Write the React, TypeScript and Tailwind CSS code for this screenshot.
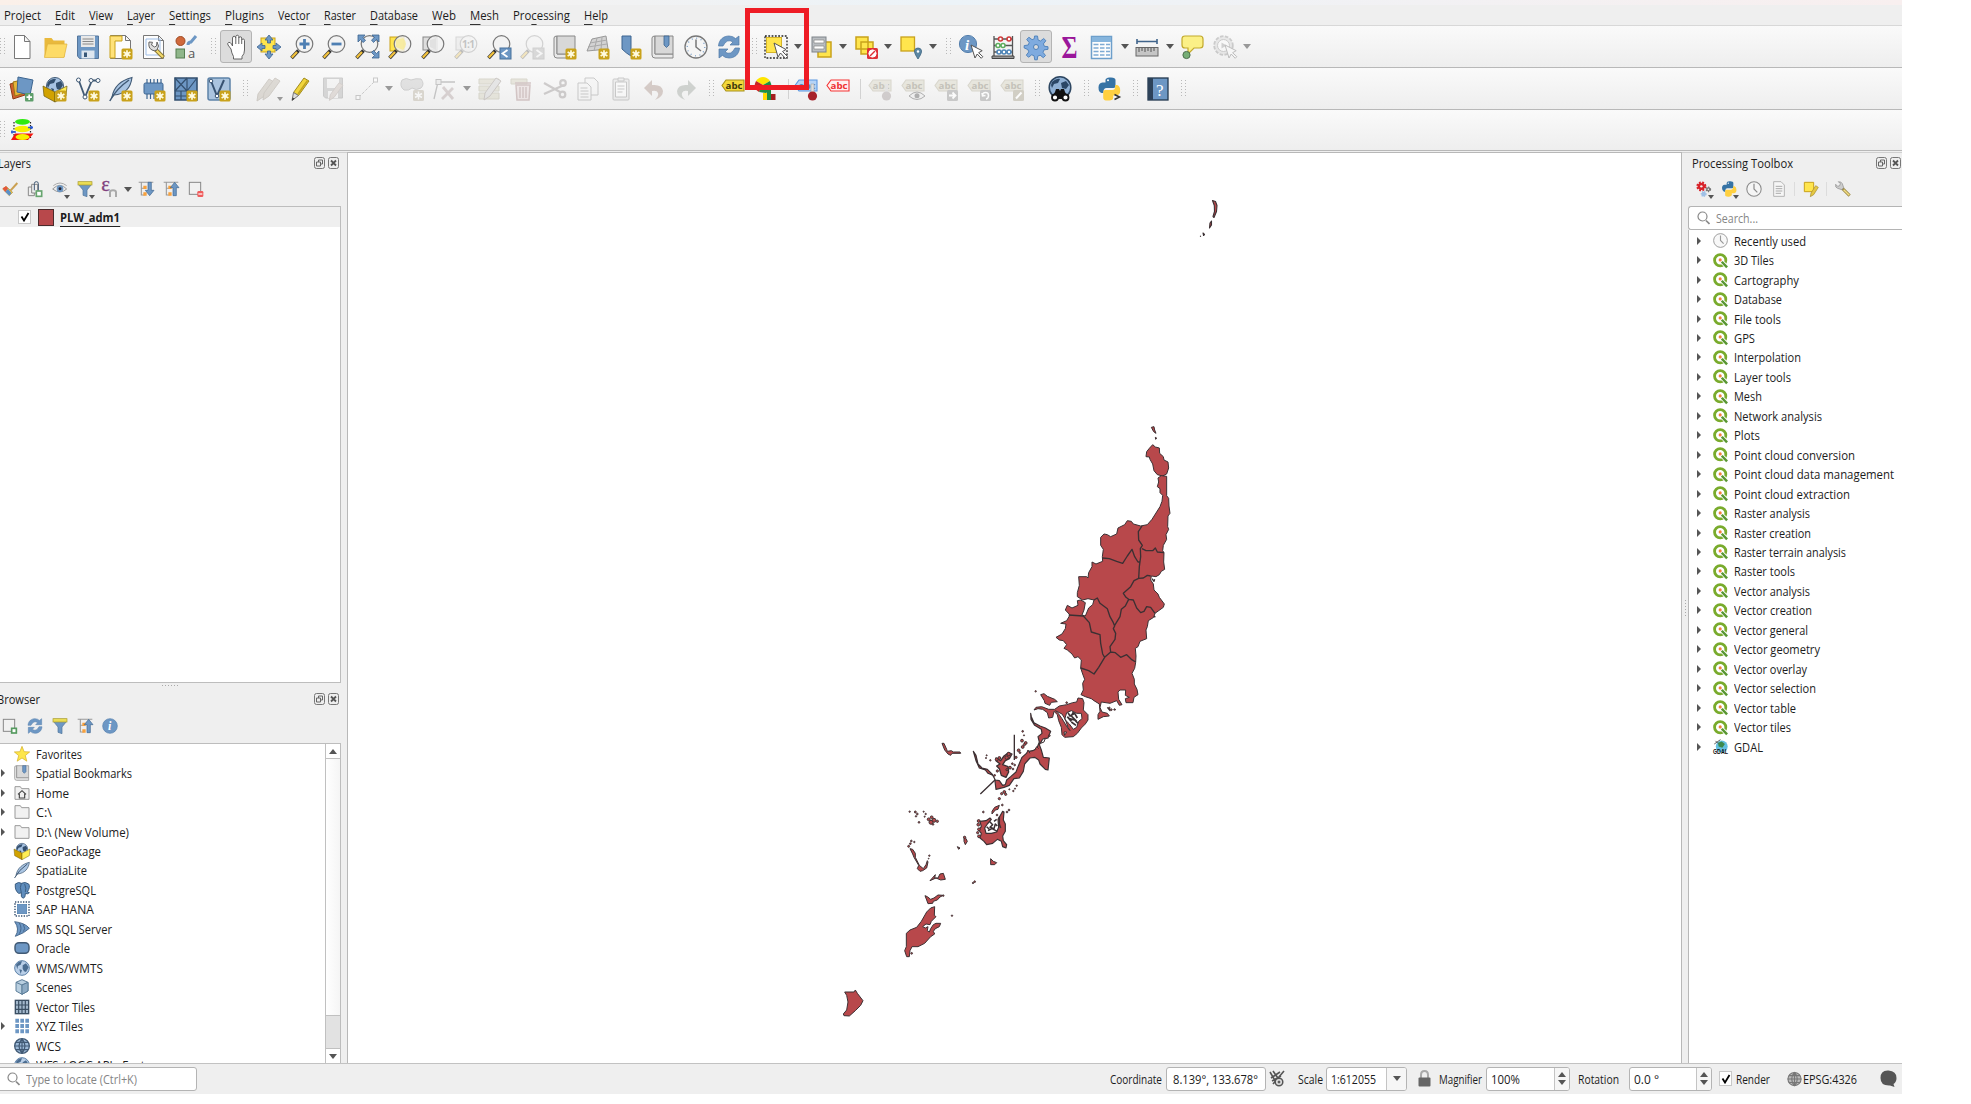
import React, { useLayoutEffect, useRef, useState } from "react";

/* Text squeezed horizontally to the given width. */
function T({ w, children, className = "" }: { w: number; children: React.ReactNode; className?: string }) {
  const ref = useRef<HTMLSpanElement>(null);
  const [s, setS] = useState(1);
  useLayoutEffect(() => {
    if (ref.current && ref.current.offsetWidth) setS(w / ref.current.getBoundingClientRect().width);
  }, []);
  return (
    <span className={"inline-block shrink-0 " + className} style={{ width: w }}>
      <span ref={ref} className="inline-block origin-left whitespace-pre" style={{ transform: `scaleX(${s})` }}>
        {children}
      </span>
    </span>
  );
}

const B = "#6d97c4";
const D = "#415a75";

const star = (
  <g>
    <rect x="12.5" y="13.5" width="11" height="11" rx="1.5" fill="#c9a21b" />
    <path d="M18 15.2v7.6M14.6 17l6.8 4M14.6 21l6.8-4" stroke="#fffbe0" strokeWidth="1.7" />
  </g>
);
const cursor = <path d="M12 10l4 13 2.2-4 4 4.3 1.6-1.6-4.2-4 3.6-2z" fill="#fff" stroke="#555" strokeWidth="1" />;
const mag = (
  <g>
    <path d="M8.5 15.5L1.5 23" stroke="#333" strokeWidth="3.6" />
    <path d="M7 17L1.8 22.6" stroke="#f3c33c" strokeWidth="2.2" />
    <circle cx="14.5" cy="9" r="8.3" fill="#f2f2f2" fillOpacity=".85" stroke="#777" strokeWidth="1.2" />
  </g>
);
const page = (
  <path d="M1.5.5h15l5 5v18h-20z M16.5.5v5h5" fill="#fdfdfd" stroke="#777" />
);
const globe = (
  <g>
    <circle cx="12" cy="9" r="8.5" fill="#a7c3e3" stroke={D} />
    <path d="M5 5q5-4 8-3l-2 4-4 1-2 4-1-3zM13 6l5-2 2 4-3 5-3-1-1-3zM8 11l3 1-1 4z" fill="#34506f" />
  </g>
);
const box = (
  <g>
    {globe}
    <path d="M0 9l12 6v10L1 19z" fill="#d1a200" stroke="#6b5a10" strokeWidth=".7" />
    <path d="M24 9l-12 6v10l11-6z" fill="#ffee55" stroke="#6b5a10" strokeWidth=".7" />
  </g>
);
const feather = (
  <g>
    <path d="M3 20C5 9 13 3 23 .5 22 9 17 17 5 18z" fill="#a9c4e2" stroke={D} strokeWidth="1.1" />
    <path d="M.8 24Q7 12 20 3" fill="none" stroke={D} strokeWidth="1.5" />
  </g>
);
const tag = (fill: string, line: string, ink: string) => (
  <g>
    <path d="M5 3h18v11H5L1 8.5z" fill={fill} stroke={line} strokeWidth="1.1" />
    <text x="4.6" y="12" fontSize="9" fontWeight="700" fill={ink} className="font-['Open_Sans',sans-serif]" textLength="17" lengthAdjust="spacingAndGlyphs">
      abc
    </text>
  </g>
);
const greyTag = tag("#e3e1d6", "#cfccbf", "#b4b1a6");
const refresh = (
  <g fill={B} stroke="#4d79a8" strokeWidth=".7">
    <path d="M1.5 11C2 4 7 1 12 1q4 0 6.600 2.600L22 1v9h-9l3-3q-6-4-10 4z" />
    <path d="M22.500 13c-.5 7-5.500 10-10.500 10q-4 0-6.600-2.600L2 23v-9h9l-3 3q6 4 10-4z" />
  </g>
);
const clock = (
  <g fill="none">
    <circle cx="12" cy="12" r="11" fill="#f5f5f5" stroke="#777" strokeWidth="1.3" />
    <circle cx="12" cy="12" r="8.800" stroke="#6d97c4" strokeWidth="1.200" strokeDasharray="1 3.600" />
    <path d="M12 4.500V12l5 4" stroke="#777" strokeWidth="1.500" />
  </g>
);
const python = (
  <g>
    <path d="M7 9V3q0-2 4-2.500 6-.5 6 2.500v6q0 2-2 2H8q-3 0-3 3.500v1.500H3q-3-1-3-5.500t4-5h7V7z" fill="#3673a5" transform="translate(1.500 0)" />
    <path d="M17 15v6q0 2-4 2.500-6 .5-6-2.500v-6q0-2 2-2h7q3 0 3-3.500V8h2q3 1 3 5.500t-4 5h-7V18z" fill="#ffd040" transform="translate(-.8 0)" />
    <circle cx="11" cy="3.300" r="1" fill="#fff" />
  </g>
);
const filter = (
  <g>
    <path d="M2 5h20l-7 8.500v10l-6-2v-8z" fill={B} stroke="#4d7299" />
    <rect x="1.500" y="1" width="21" height="5" fill="#e9dc55" stroke="#a79a2a" />
  </g>
);
const info = (
  <g>
    <circle cx="12" cy="12" r="11" fill={B} stroke="#5580ad" />
    <text x="9" y="18.500" fontSize="18" fontStyle="italic" fontWeight="700" fill="#fff" className="font-['Liberation_Serif',serif]">i</text>
  </g>
);
const tree = (
  <g fill="none">
    <path d="M1 2h22M5 2v19h5M5 11h5" stroke="#999" strokeWidth="1.600" />
    <path d="M8 7h5v5H8zM8 17h5v5H8z" fill="#f8a13c" />
  </g>
);
const folder = <path d="M1.500 2.500h8l2 3h11v16h-21z" fill="#f1f1f1" stroke="#999" strokeWidth="1.500" />;
const book = (
  <g>
    <path d="M1 3q0-2 3-2v18h18v4H4q-3 0-3-3z" fill="#e8e8e8" stroke="#888" />
    <path d="M4 1h18v18H4z" fill="#d8d8d8" stroke="#888" />
  </g>
);
const pencil = (a: string, b: string) => (
  <path d="M4 16L15 1l5 3L9 19l-6 4z" fill={a} stroke={b} />
);
const globeGrid = (
  <g fill="none">
    <circle cx="12" cy="12" r="11" fill="#9cb9d8" stroke={D} strokeWidth="2" />
    <path d="M1 12h22M12 1v22M3 6.500h18M3 17.500h18M12 1q-9 11 0 22M12 1q9 11 0 22" stroke={D} strokeWidth="1.800" />
  </g>
);
const gearPath = "M10.500 1h3l.6 4 2.400 1 3.200-2.500 2.200 2.200-2.500 3.200 1 2.400 3.600.4v2.600l-4 .6-1 2.400 2.500 3.200-2.200 2.200-3.200-2.500-2.400 1-.4 3.600h-2.600l-.6-4-2.400-1-3.200 2.500-2.200-2.200 2.500-3.200-1-2.400L.200 13v-2.400l4-.6 1-2.400L2.700 4.400l2.200-2.200 3.200 2.500 2.200-1z";

const icons: Record<string, React.ReactNode> = {
  new: <path d="M4.500.500h10l5.500 6V23.500H4.500z M14.500.500v6h5.500" fill="#fff" stroke="#777" />,
  open: <g><path d="M1.500 3h7l2 2.500h11V22h-20z" fill="#e9b93c" /><path d="M4.500 9H24l-3 13.500H1.500z" fill="#fddb67" stroke="#e0b23a" strokeWidth=".7" /></g>,
  save: <g><path d="M1.500 1h21v22.500H3.500L1.500 21z" fill={B} stroke="#54769c" /><rect x="5" y="1" width="14" height="11" fill="#e9e9e9" /><path d="M6.500 4h11M6.500 6.500h11M6.500 9h11" stroke="#888" /><path d="M5.500 15.500h13v8h-13z" fill="#dde6ef" /><path d="M8 17.500h3v4.500H8z" fill="#385878" /></g>,
  layoutNew: <g>{page}<path d="M1 1h12v5H6v17H1z" fill="#ffe27a" stroke="#c9a21b" />{star}</g>,
  layoutMgr: <g>{page}<path d="M4 4h14v16H4z" fill="none" stroke="#9dbde6" /><path d="M13 14l8.500 8.500" stroke="#8d7a35" strokeWidth="4" /><path d="M14.500 15.500l6.500 6.500" stroke="#f5dc6c" strokeWidth="2" /><path d="M7 7l3.500.3L9.500 10l3 2 2-1 .5-4q3 4 0 8-3 1.500-5 0-4-2-3-8z" fill="#ddd" stroke="#666" /></g>,
  styles: <g><circle cx="6.500" cy="6" r="4.500" fill="#d0693c" stroke="#a04a22" /><path d="M14 10q0-3 3-3l5-6" stroke={B} strokeWidth="3" fill="none" /><rect x="2" y="14" width="8.500" height="9" fill="#8fb68a" stroke="#557d50" /><text x="14" y="23" fontSize="13" fill="#555" className="font-['Open_Sans',sans-serif]">a</text></g>,
  hand: <path d="M7 14L4 10q-1-2 .8-2.600 1.500-.4 2.700 1.600l1 2V3q.2-1.800 1.600-1.800T11.800 3V1.600Q12 .2 13.300.2t1.500 1.400V3q.2-1.200 1.500-1.200T17.700 3v2q.3-1 1.500-1t1.300 1.500V15q0 4-2.500 6.500V24H9.500v-2.500Q7.500 18 7 14zM11.800 3v6M14.800 3v6M17.700 5v4" fill="#fff" stroke="#555" strokeWidth=".9" />,
  panSel: <g><rect x="4" y="3" width="14" height="14" fill="#ffe54d" stroke="#c9a21b" /><path d="M12 0l4 5h-2.500v3h-3V5H8zM12 24l4-5h-2.500v-3h-3v3H8zM0 12l5-4v2.500h3v3H5V16zM24 12l-5-4v2.500h-3v3h3V16z" fill={B} stroke="#3d6590" strokeWidth=".8" /></g>,
  zoomIn: <g>{mag}<path d="M14.500 4v10M9.500 9h10" stroke="#4e7fb3" strokeWidth="2.800" /></g>,
  zoomOut: <g>{mag}<path d="M9.500 9h10" stroke="#4e7fb3" strokeWidth="2.800" /></g>,
  zoomFull: <g>{mag}<path d="M3 0h7L8 2.500l2.500 3-2.500 2-2.500-3L3 7zM24 0v7l-2.500-2.500-3 3-2-2.500 3-2.500L17 0zM24 23h-7l2.500-2.500-3-3 2-2 3 3L24 16z" fill={B} stroke="#3d6590" strokeWidth=".8" /></g>,
  zoomSel: <g><rect x="2" y="2" width="14" height="14" fill="#ffe54d" stroke="#c9a21b" />{mag}<path d="M15 3q6 6 0 12l-7-3V5z" fill="#f8e98a" opacity=".7" /></g>,
  zoomLayer: <g><rect x="2" y="2" width="14" height="13" fill="#ddd" stroke="#888" />{mag}<path d="M15 3v12l-6-3V5z" fill="#ddd" opacity=".8" /></g>,
  zoomNative: <g opacity=".28"><rect x="2" y="2" width="14" height="13" fill="#ddd" stroke="#888" />{mag}<text x="8" y="13" fontSize="10" fontWeight="700" fill="#444" textLength="13" className="font-['Open_Sans',sans-serif]">1:1</text></g>,
  zoomLast: <g>{mag}<rect x="13" y="13" width="11" height="11" fill={B} stroke="#47709b" /><path d="M20.500 15l-5 3.500 5 3.500" fill="none" stroke="#fff" strokeWidth="1.800" /></g>,
  zoomNext: <g opacity=".28">{mag}<rect x="13" y="13" width="11" height="11" fill="#999" stroke="#777" /><path d="M16.500 15l5 3.500-5 3.500" fill="none" stroke="#fff" strokeWidth="1.800" /></g>,
  mapView: <g>{book}{star}</g>,
  map3d: <g><path d="M6 4l14-3 2 13-21 2z" fill="#d3d3d3" stroke="#999" /><path d="M4 8l17-3M2 12l19-3M11 3l-3 13M16 2l-1 13" stroke="#aaa" fill="none" />{star}</g>,
  bookmarkNew: <g><path d="M4 1h9v20l-4.500-3L4 14z" fill={B} stroke="#3d6590" />{star}</g>,
  bookmarks: <g>{book}<path d="M13 1h5v9l-2.500 2.500L13 10z" fill={B} stroke="#3d6590" strokeWidth=".8" /></g>,
  clock,
  refresh,
  select: <g><rect x="2.500" y="2.500" width="15" height="15" fill="#ffe54d" stroke="#d6b529" /><rect x="1" y="1" width="22" height="22" fill="none" stroke="#222" strokeWidth="1.300" strokeDasharray="1.800 1.500" /><path d="M10 8l4 14 2.500-4 5 5.500 2-2-5-5 3.500-2z" fill="#fff" stroke="#555" strokeWidth="1" /></g>,
  selValue: <g><rect x="9" y="7" width="13" height="15" fill="#ffe54d" stroke="#c9a21b" strokeWidth="1.500" /><rect x="3" y="2" width="14" height="15" fill="#b9bdc1" stroke="#7e8489" /><path d="M5 5h10v3H5zM5 11h10v3H5z" fill="#fff" stroke="#888" strokeWidth=".7" /></g>,
  deselect: <g><path d="M2 2h12v12H2zM7 7h12v12H7z" fill="#ffe54d" stroke="#c9a21b" strokeWidth="1.500" /><rect x="13" y="13" width="11" height="11" rx="1.500" fill="#df3038" /><circle cx="18.500" cy="18.500" r="3.600" fill="#fff" stroke="#fff" /><path d="M16 21l5-5" stroke="#df3038" strokeWidth="1.500" /></g>,
  selLoc: <g><rect x="2" y="2" width="13.500" height="14" fill="#ffe54d" stroke="#c9a21b" strokeWidth="1.300" /><path d="M19 24q-4-6-3.500-8.500t3.500-2.500 3.500 2.500T19 24z" fill="#5c87a3" stroke="#3d6580" strokeWidth=".8" /><circle cx="19" cy="16.500" r="1.200" fill="#fff" /></g>,
  identify: <g><circle cx="9" cy="9" r="8.600" fill={B} stroke="#5580ad" /><text x="6" y="14.500" fontSize="15" fontStyle="italic" fontWeight="700" fill="#fff" className="font-['Liberation_Serif',serif]">i</text>{cursor}</g>,
  abacus: <g fill="none"><path d="M3 1v21M21.500 1v21M3 4h18M3 10.500h18M3 17h18" stroke="#555" strokeWidth="1.300" /><path d="M1 21h22v2.500H1z" fill="#999" stroke="#444" /><g fill="#fff" strokeWidth="1.600"><g stroke="#d03a3a"><circle cx="9.500" cy="4" r="2" /><circle cx="18" cy="4" r="2" /></g><g stroke="#5fae5f"><circle cx="7" cy="10.500" r="2" /><circle cx="12" cy="10.500" r="2" /></g><g stroke="#4f86b8"><circle cx="8" cy="17" r="2" /><circle cx="13" cy="17" r="2" /><circle cx="18" cy="17" r="2" /></g></g></g>,
  gear: <g><path d={gearPath} fill="#7fabdf" stroke="#4b7fb9" strokeWidth=".9" /><circle cx="12" cy="12" r="2.500" fill="#dcdcdc" stroke="#4b7fb9" /></g>,
  sigma: <text x="4.500" y="22.500" fontSize="31" fontWeight="700" fill="#9a169a" textLength="16" lengthAdjust="spacingAndGlyphs" className="font-['Liberation_Serif',serif]">Σ</text>,
  table: <g><rect x="1.500" y="1.500" width="20" height="22" fill="#fdfdfd" stroke="#6d9fcb" strokeWidth="1.500" /><rect x="2" y="2" width="19" height="5" fill="#86b5dd" /><path d="M3.500 9.500h5M10 9.500h4.500M16 9.500h4M3.500 13h5M10 13h4.500M16 13h4M3.500 16.500h5M10 16.500h4.500M16 16.500h4M3.500 20h5M10 20h4.500M16 20h4" stroke="#7eaad3" strokeWidth="1.400" /></g>,
  ruler: <g fill="none"><path d="M2 6.500h20M2 4v5M22 4v5" stroke="#40648b" strokeWidth="1.600" /><rect x="1" y="12.500" width="22" height="8.500" fill="#c5c5c5" stroke="#666" /><path d="M4 13v4M7 13v3M10 13v4M13 13v3M16 13v4M19 13v3" stroke="#555" /></g>,
  tip: <g><path d="M5 1h15q3 0 3 3v6q0 3-3 3h-6l-6 6V13H5q-3 0-3-3V4q0-3 3-3z" fill="#fbf087" stroke="#c2a92c" strokeWidth="1.200" /><circle cx="6.500" cy="20" r="3.600" fill="#76ae76" stroke="#4c6f4c" /></g>,
  action: <g opacity=".33"><circle cx="10.500" cy="10.500" r="9.300" fill="#ccc" stroke="#777" strokeWidth="1.800" strokeDasharray="3.500 1.500" /><circle cx="10.500" cy="10.500" r="6" fill="#fff" stroke="#777" /><path d="M8.500 7.500l5 3-5 3z" fill="#888" />{cursor}</g>,
  dsm: <g><path d="M0 7l12-3 3 14-12 4z" fill="#d0602f" stroke="#8d3c16" /><path d="M3 5l13-3 2 13-13 4z" fill="#e5b53a" stroke="#9a7517" /><path d="M8 0l15 3-3 15-13-3z" fill={B} stroke="#3d6590" /><rect x="15" y="16" width="8.500" height="8.500" rx="1" fill="#5d9e6a" /><path d="M19.200 17.500v5.500M16.500 20.200h5.500" stroke="#fff" strokeWidth="1.700" /></g>,
  gpkg: <g>{box}{star}</g>,
  shp: <g fill="#fff" stroke={D}><path d="M3 4L9 20 16 3.500h6" fill="none" strokeWidth="1.800" /><circle cx="2.500" cy="3" r="2" /><circle cx="9" cy="20" r="2" /><circle cx="15" cy="3.500" r="2" /><circle cx="22" cy="3.500" r="2" /><g stroke="none">{star}</g></g>,
  spatialite: <g>{feather}{star}</g>,
  memory: <g><path d="M5 2v20M8.500 2v20M12 2v20M15.500 2v20M19 2v20" stroke="#3d6590" strokeWidth="1.200" /><rect x="2" y="6" width="19" height="11" rx="1.500" fill={B} stroke="#3d6590" />{star}</g>,
  mesh: <g><path d="M1 1h22v22H1z" fill={B} stroke="#34506f" strokeWidth="1.600" /><path d="M13 1v22M1 14h22M1 1l12 13M13 1L1 14M23 1L13 14M7 14v9M1 19h12" stroke="#34506f" strokeWidth="1.200" />{star}</g>,
  gpx: <g><rect x="1" y="1" width="22" height="22" rx="2" fill="#aac4df" stroke="#5d82a8" strokeWidth="1.500" /><path d="M4 4l6 15 7-16" fill="none" stroke="#385372" strokeWidth="2" /><circle cx="4" cy="4" r="1.800" fill="#fff" stroke="#385372" /><circle cx="10" cy="19" r="1.800" fill="#fff" stroke="#385372" />{star}</g>,
  editsOff: <g opacity=".4"><g transform="translate(-2 1)">{pencil("#b9b1a4", "#9a9184")}</g><g transform="translate(4 0)">{pencil("#b9b1a4", "#9a9184")}</g></g>,
  pencil: <g><path d="M4.500 15.500L15 1l5 3L9.500 18.500z" fill="#f1d53c" stroke="#a18b1c" /><path d="M9 17L18.500 3.500" stroke="#c2a420" strokeWidth="1.500" /><path d="M4.500 15.500l-1.500 8 6.500-5z" fill="#ddd" stroke="#777" /><path d="M3 23.500l.6-3 2 1.300z" fill="#333" /></g>,
  saveOff: <g opacity=".32"><path d="M1.500 1h19v20h-17l-2-2z" fill="#999" stroke="#777" /><path d="M5 2h12v9H5zM6 14h10v7H6z" fill="#eee" /><g transform="translate(5 5) scale(.8)">{pencil("#b9a9a0", "#86766f")}</g></g>,
  lineOff: <g opacity=".4" fill="#fff" stroke="#888"><path d="M4 20L20 4" strokeDasharray="3 1.500" /><rect x="1" y="18.500" width="4" height="4" /><rect x="18.500" y="1" width="4" height="4" /></g>,
  polyOff: <g opacity=".35"><path d="M2 3q4-3 9 0 5-2 10-1 4 5 0 9-5 3-9 0-3 3-8 2-5-4-2-10z" fill="#bbb" stroke="#888" /><rect x="13" y="13" width="11" height="11" rx="1.500" fill="#aaa08a" /><path d="M18.500 14.500v8M15 16.500l7 4M15 20.500l7-4" stroke="#fff" strokeWidth="1.500" /></g>,
  vertexOff: <g opacity=".38" fill="none" stroke="#777"><path d="M5 5h17M5 5L1 22" strokeWidth="1.300" /><rect x="3" y="2.500" width="5" height="5" fill="#ddd" /><path d="M9 22L20 11M10 10l10 12" strokeWidth="2.800" stroke="#a99" /></g>,
  attrOff: <g opacity=".38"><path d="M1 2h20v5H1zM1 9h20v5H1zM1 16h20v6H1z" fill="#cfcbb4" stroke="#a9a58c" /><g transform="translate(3 0)">{pencil("#ccc", "#8a8079")}</g></g>,
  trashOff: <g opacity=".38"><path d="M1 2h16v5H1z" fill="#cfcbb4" stroke="#a9a58c" /><path d="M5 6h16M6 8h14l-1 15H7z M10 10v11M13 10v11M16 10v11" fill="#e3d0d0" stroke="#a07c7c" strokeWidth="1.500" /></g>,
  cutOff: <g opacity=".36" fill="none" stroke="#8a8484" strokeWidth="2.200"><path d="M1 6l16 9M1 17l20-9" /><circle cx="19.500" cy="17.500" r="2.800" /><circle cx="20" cy="6" r="2.800" /></g>,
  copyOff: <g opacity=".34" fill="#f4f4f4" stroke="#777"><path d="M9 1h9l4 4v13H9z" /><path d="M2 6h9l4 4v13H2z" /><path d="M4.500 11h7M4.500 14h8M4.500 17h8M4.500 20h8" /></g>,
  pasteOff: <g opacity=".34" fill="#ddd" stroke="#777"><rect x="4" y="2" width="16" height="21" rx="1" /><path d="M6.500 5h11v15h-11z" fill="#fff" /><path d="M8.500 9h7M8.500 12h7M8.500 15h5" /><path d="M9 1h6v3H9z" /></g>,
  undoOff: <path d="M10 3v5q10-1 11 6 0 6-8 9 4-4 3-7-1-3-6-2v5l-8-8z" fill="#c9bcb7" opacity=".75" />,
  redoOff: <path d="M13 3v5Q3 7 2 14q0 6 8 9-4-4-3-7 1-3 6-2v5l8-8z" fill="#c2c6c2" opacity=".75" />,
  abcYellow: tag("#f4d93b", "#a8921c", "#41390d"),
  pie: <g><path d="M9 8L2 4Q5 0 9 0t7 4z" fill="#ffe500" /><path d="M9 8L2 4q-4 7 3 11z" fill="#c62626" /><path d="M9 8l7-4q4 8-4 12l-7-1z" fill="#1c9045" /><path d="M9 16h4v7H9z" fill="#ffd900" /><path d="M13 12h4v11h-4z" fill="#1c9045" /><path d="M17 17h4.500v6H17z" fill="#a51f1f" /></g>,
  abcBlue: <g>{tag("#b5d3f6", "#5b97e2", "#5b87bb")}<path d="M17 7h3v9h-3z" fill="#ddd" stroke="#999" strokeWidth=".5" /><circle cx="18.500" cy="19" r="4.600" fill="#a7222b" /></g>,
  abcRed: tag("#fff1f1", "#f53434", "#e33"),
  abcPin: <g opacity=".7">{greyTag}<path d="M17 7h3v9h-3z" fill="#ddd" /><circle cx="18.500" cy="19" r="4.600" fill="#c2bcbc" /></g>,
  abcEye: <g opacity=".75">{greyTag}<path d="M8 19q8-8 16 0-8 7-16 0z" fill="#eee" stroke="#999" /><circle cx="16" cy="18.700" r="2.500" fill="#999" /></g>,
  abcMove: <g opacity=".75">{greyTag}<rect x="13" y="13" width="11" height="11" rx="1.500" fill="#bbb" /><path d="M15 18.500h6M18.500 15.500l3 3-3 3" fill="none" stroke="#fff" strokeWidth="1.800" /></g>,
  abcRot: <g opacity=".75">{greyTag}<rect x="13" y="13" width="11" height="11" rx="1.500" fill="#bbb" /><path d="M15.500 18.500q0-3 3-3t3 3-2.500 3.500M15 16l.5 3 3-.5" fill="none" stroke="#fff" strokeWidth="1.500" /></g>,
  abcEdit: <g opacity=".75">{greyTag}<rect x="13" y="13" width="11" height="11" rx="1.500" fill="#c6c2b5" /><path d="M16 21.500l5.500-6" stroke="#fff" strokeWidth="2" /></g>,
  search: <g><circle cx="12" cy="10.500" r="10.800" fill="#8fb0d4" stroke="#2d4661" strokeWidth="1.500" /><path d="M4 5q5-4 8-3l-2 4-4 1-2 4-1-3zM13 6l5-2 3 4-3 4-4-1z" fill="#2b4766" /><path d="M8 12h3l1 2 1-2h3l1 3 3 5-5 2h-6l-5-2 3-5z" fill="#111" /><circle cx="7" cy="20.500" r="3" fill="#fff" stroke="#111" strokeWidth="1.800" /><circle cx="17.500" cy="20.500" r="3" fill="#fff" stroke="#111" strokeWidth="1.800" /></g>,
  pyConsole: <g>{python}<path d="M17.500 17.500l5 2.500-5 2.500" fill="none" stroke="#333" strokeWidth="1.500" /></g>,
  help: <g><rect x="2" y="1" width="20" height="22" fill={B} stroke="#23384f" strokeWidth="1.300" /><path d="M2 1h5v22H2z" fill="#2d4259" /><text x="10" y="18.500" fontSize="17" fill="#fff" className="font-['Liberation_Serif',serif]">?</text></g>,
  stack: <g><path d="M4 4v16M20.500 4v16" stroke="#222" strokeWidth="1.200" strokeDasharray="1.500 1.500" /><ellipse cx="12.500" cy="3.800" rx="7.500" ry="2.900" fill="#2eea12" /><ellipse cx="12.500" cy="11" rx="8" ry="3.200" fill="#f7f000" /><path d="M1 14h5M18 9.500h5M2 12.500v3M21.500 8v3" stroke="#2b5bd7" strokeWidth="1.600" /><path d="M1 22l4-6.500h18.500L18 22z" fill="#f3150e" /><ellipse cx="12.500" cy="19" rx="7" ry="2.900" fill="#f7f000" /></g>,
  brush: <g><path d="M13 14L23 3" stroke="#caa052" strokeWidth="3" /><path d="M6 8l10 9-5 5L1 12z" fill="#e7c24b" stroke="#b4903a" /><path d="M1 11l5-3 3 3-4 6z" fill="#e4573d" /><path d="M5 16l4-4 5 6-3 4z" fill="#5a8fc9" /></g>,
  addGroup: <g fill="#eee" stroke="#888" strokeWidth="1.500"><path d="M2 9h9v13H2z" /><path d="M7 5h9v13H7z" /><path d="M11 14V4q0-3 3-3t3 3v12" fill="none" stroke={D} /><rect x="14" y="15" width="8" height="8" fill="#fff" stroke="#67a56f" strokeWidth="2.500" /></g>,
  eye: <g><path d="M1 12Q12 1 22 12 12 21 1 12z" fill="#eee" stroke="#999" strokeWidth="1.500" /><circle cx="12" cy="11.500" r="5" fill="#6d97c4" /><circle cx="12" cy="11.500" r="2.200" fill="#223" /><path d="M2 7Q12-1 22 7" fill="none" stroke="#aaa" strokeWidth="1.500" /></g>,
  filter,
  epsilon: <g><text x="-1" y="15" fontSize="31" fill="#80407e" stroke="#80407e" strokeWidth=".5" className="font-['Liberation_Serif',serif]">ε</text><path d="M12 24v-7q0-3 4.500-3t4.500 3v7" fill="none" stroke="#aaa" strokeWidth="3" /></g>,
  expand: <g>{tree}<path d="M15 2h5v12h4l-6.500 8-6.500-8h4z" fill={B} stroke="#3d6590" /></g>,
  collapse: <g>{tree}<path d="M15 22h5V10h4l-6.500-8L11 10h4z" fill={B} stroke="#3d6590" /></g>,
  removeLayer: <g><rect x="2" y="2" width="17" height="18" fill="#f1f1f1" stroke="#888" strokeWidth="1.500" /><rect x="14" y="15" width="9" height="9" rx="2" fill="#ef5b5b" /><path d="M15.500 19.500h6" stroke="#fff" strokeWidth="1.800" /></g>,
  addLayer: <g><rect x="2" y="2" width="17" height="18" fill="#f1f1f1" stroke="#888" strokeWidth="1.500" /><rect x="14.500" y="15.500" width="7" height="7" fill="#fff" stroke="#559a5f" strokeWidth="2.500" /></g>,
  info,
  fav: <path d="M12 .500l3.200 8 8.300.4-6.500 5.400 2.200 8.500L12 18l-7.200 4.800L7 14.300.500 8.900l8.300-.4z" fill="#fde64b" stroke="#d1aa20" />,
  home: <g>{folder}<path d="M6 14l6-5.500 6 5.500M8 13v6.500h8V13" fill="none" stroke="#444" strokeWidth="1.700" /></g>,
  folder,
  gpkgPlain: box,
  feather,
  pg: <g><path d="M2 3q5-4 9-1 6-3 11 1 3 4-2 12l3 1q-3 3-6 1 0 8-4 7-3-1-2-8-2 1-4 1Q1 13 2 3z" fill="#5f8dbd" stroke="#3a5c80" strokeWidth="1.500" /><path d="M11 2q-3 6 0 14M16 3q3 7 1 12" fill="none" stroke="#3a5c80" strokeWidth="1.400" /></g>,
  hana: <g><rect x="5" y="5" width="14" height="14" fill={B} stroke="#4c7dae" /><rect x="1.500" y="1.500" width="21" height="21" fill="none" stroke="#385372" strokeWidth="2.200" strokeDasharray="2 2" /></g>,
  mssql: <path d="M1 1q16 2 22 10-7 7-21 12Q9 12 1 1zM8 3q5 8 0 16M14 5q4 7 0 11" fill={B} stroke="#3d5f84" strokeWidth="1.300" />,
  oracle: <rect x="1.500" y="4" width="21" height="16" rx="6" fill={B} stroke={D} strokeWidth="2.200" />,
  wms: <g><circle cx="12" cy="12" r="11" fill="#b9cfe8" stroke="#5d82a8" strokeWidth="1.500" /><path d="M3 7q5-6 9-5l-2 5-4 2-1 5zM13 8l5-3 4 6-4 7-3-1-2-4zM8 14l4 1-2 6z" fill="#4a6c90" /></g>,
  scenes: <g fill="#b9cfe0" stroke="#5d7e99" strokeWidth="1.500"><path d="M12 1l9 4v13l-9 5-9-5V5z" /><path d="M3 5l9 4 9-4M12 9v14" fill="none" /><path d="M12 9l9-4v13l-9 5z" fill="#8eabc4" /></g>,
  vtiles: <g><rect x="2" y="2" width="20" height="20" fill="#a3b8cc" stroke="#3b4f63" strokeWidth="2" /><path d="M7 2v20M12 2v20M17 2v20M2 9h20M2 15.500h20" stroke="#3b4f63" strokeWidth="1.800" /></g>,
  xyz: <path d="M2 1h5.500v6H2zM9.500 1H15v6H9.500zM17 1h5.500v6H17zM2 9h5.500v6H2zM9.500 9H15v6H9.500zM17 9h5.500v6H17zM2 17h5.500v6H2zM9.500 17H15v6H9.500zM17 17h5.500v6H17z" fill={B} />,
  wcs: globeGrid,
  q: <g><circle cx="11.500" cy="11.500" r="9" fill="#fff" stroke="#79ab2c" strokeWidth="4.500" /><path d="M14 14l9 9" stroke="#fff" strokeWidth="6.500" /><path d="M14 14l8.500 9" stroke="#589632" strokeWidth="4" /><circle cx="11.500" cy="11" r="2.500" fill="#f0813a" /></g>,
  recent: <g fill="none" stroke="#999"><circle cx="12" cy="12" r="11" fill="#f8f8f8" strokeWidth="1.500" /><path d="M12 4v8l5 5" strokeWidth="1.800" /></g>,
  gdal: <g><circle cx="14" cy="12" r="9.500" fill="#62bfe0" /><path d="M8 6l6-2 5 4-4 6-6-2z" fill="#3c8a4c" /><path d="M2 8L12 1M4 3l4 4" stroke="#555" strokeWidth="1.500" /><text x="0" y="24" fontSize="11" fontWeight="700" fill="#111" textLength="24" lengthAdjust="spacingAndGlyphs" className="font-['Liberation_Sans',sans-serif]">GDAL</text></g>,
  gears: <g><circle cx="8" cy="8" r="5.500" fill="#d8232a" stroke="#d8232a" strokeWidth="4" strokeDasharray="2.500 1.900" /><circle cx="8" cy="8" r="1.800" fill="#efefef" /><circle cx="18.500" cy="12.500" r="3" fill="#777" stroke="#777" strokeWidth="2.500" strokeDasharray="1.800 1.300" /><circle cx="18.500" cy="12.500" r="1.200" fill="#efefef" /><circle cx="11.500" cy="19.500" r="3.500" fill="#9fc0e6" stroke="#9fc0e6" strokeWidth="2" strokeDasharray="1.800 1.300" /></g>,
  python,
  history: <g fill="none" stroke="#8c8c8c"><circle cx="12" cy="12" r="10.800" strokeWidth="1.600" fill="#f5f5f5" /><path d="M12 4v8l5 5" strokeWidth="1.800" /></g>,
  results: <g fill="#f6f6f6" stroke="#aaa"><path d="M4 1h11l5 5v17H4z" strokeWidth="1.300" /><path d="M7 8h10M7 11.500h10M7 15h10M7 18.500h8" strokeWidth="1.500" /></g>,
  editInPlace: <g><path d="M2 2h14v14H2z" fill="#ffe54d" stroke="#c9a21b" strokeWidth="1.500" /><path d="M12 18l7-11 4 2.500-7 11-5 3z" fill="#e5c742" stroke="#a58b30" /></g>,
  wrench: <g><path d="M11 11l11 11" stroke="#9c8a45" strokeWidth="4.500" /><path d="M13 13l8.500 8.500" stroke="#f3dd83" strokeWidth="2.200" /><path d="M5 1l3 3-1 3-3 1-3-3q-1 5 3 6 3 1 6 2l3-3q-1-3-2-6-1-3-6-3z" fill="#ccc" stroke="#888" /></g>,
};

function Ic({ n, s = "size-6", className = "" }: { n: string; s?: string; className?: string }) {
  return (
    <svg viewBox="0 0 24 24" className={"shrink-0 overflow-visible " + s + " " + className}>
      {icons[n]}
    </svg>
  );
}

function Btn({ n, on }: { n: string; on?: boolean }) {
  return (
    <div className="flex w-[32.9px] shrink-0 justify-center">
      <div className={"flex h-[33px] w-8 items-center justify-center rounded-[3px] border " + (on ? "border-[#b4b4b4] bg-[#dcdcdc]" : "border-transparent")}>
        <Ic n={n} />
      </div>
    </div>
  );
}

const Arrow = ({ off }: { off?: boolean }) => (
  <div className="flex w-3 shrink-0 justify-center">
    <svg viewBox="0 0 8 5" className="h-[5px] w-2"><path d="M0 0h8L4 5z" fill={off ? "#999" : "#555"} /></svg>
  </div>
);

const dotsPath = (rows: number) => Array.from({ length: rows }, (_, i) => `M0 ${i * 3}h1v1h-1zM4 ${i * 3}h1v1h-1z`).join("");
const Handle = ({ className }: { className: string }) => (
  <div className={"flex shrink-0 justify-center " + className}>
    <svg viewBox="0 0 5 18" className="h-[18px] w-[5px]"><path d={dotsPath(6)} fill="#b9b9b9" /></svg>
  </div>
);
const Sep = ({ className }: { className: string }) => (
  <div className={"flex shrink-0 justify-end " + className}><div className="h-5 w-px bg-[#d2d2d2]" /></div>
);
const Bar = ({ children, className = "" }: { children: React.ReactNode; className?: string }) => (
  <div className={"flex h-[42px] shrink-0 items-center border-b border-[#b8b8b8] bg-linear-to-b from-[#fafafa] to-[#eeeeee] " + className}>{children}</div>
);

const menu: [string, string, string, number][] = [
  ["Project", "", "", 37], ["", "E", "dit", 20], ["", "V", "iew", 24], ["", "L", "ayer", 28], ["", "S", "ettings", 42], ["", "P", "lugins", 39],
  ["Vect", "o", "r", 32], ["", "R", "aster", 32], ["", "D", "atabase", 48], ["", "W", "eb", 24], ["", "M", "esh", 29], ["Pro", "c", "essing", 57], ["", "H", "elp", 24],
];

const browser: [string, string, number, boolean?][] = [
  ["fav", "Favorites", 46], ["bookmarks", "Spatial Bookmarks", 96, true], ["home", "Home", 33, true], ["folder", "C:\\", 16, true],
  ["folder", "D:\\ (New Volume)", 93, true], ["gpkgPlain", "GeoPackage", 65], ["feather", "SpatiaLite", 51], ["pg", "PostgreSQL", 60],
  ["hana", "SAP HANA", 58], ["mssql", "MS SQL Server", 76], ["oracle", "Oracle", 34], ["wms", "WMS/WMTS", 67], ["scenes", "Scenes", 36],
  ["vtiles", "Vector Tiles", 59], ["xyz", "XYZ Tiles", 47, true], ["wcs", "WCS", 25], ["wms", "WFS / OGC API - Features", 132],
];

const toolbox: [string, string, number][] = [
  ["recent", "Recently used", 72], ["q", "3D Tiles", 40], ["q", "Cartography", 65], ["q", "Database", 48], ["q", "File tools", 47], ["q", "GPS", 21],
  ["q", "Interpolation", 67], ["q", "Layer tools", 57], ["q", "Mesh", 28], ["q", "Network analysis", 88], ["q", "Plots", 26],
  ["q", "Point cloud conversion", 121], ["q", "Point cloud data management", 160], ["q", "Point cloud extraction", 116], ["q", "Raster analysis", 76],
  ["q", "Raster creation", 77], ["q", "Raster terrain analysis", 112], ["q", "Raster tools", 61], ["q", "Vector analysis", 76], ["q", "Vector creation", 78],
  ["q", "Vector general", 74], ["q", "Vector geometry", 86], ["q", "Vector overlay", 73], ["q", "Vector selection", 82], ["q", "Vector table", 62],
  ["q", "Vector tiles", 57], ["gdal", "GDAL", 29],
];

const DockButtons = () => (
  <div className="flex gap-[3px]">
    <svg viewBox="0 0 11 12" className="h-3 w-[11px]"><rect x=".5" y=".5" width="10" height="11" rx="2" fill="#eee" stroke="#777" /><path d="M2.500 5h4v4h-4zM4.500 5V3h4v4h-2" fill="none" stroke="#666" /></svg>
    <svg viewBox="0 0 11 12" className="h-3 w-[11px]"><rect x=".5" y=".5" width="10" height="11" rx="2" fill="#eee" stroke="#777" /><path d="M3 3.500l5 5M8 3.500l-5 5" stroke="#555" strokeWidth="1.800" /></svg>
  </div>
);

const Tri = () => <svg viewBox="0 0 4 8" className="h-2 w-1 shrink-0"><path d="M0 0l4 4-4 4z" fill="#555" /></svg>;
const Lens = () => (
  <svg viewBox="0 0 13 14" className="h-[14px] w-[13px] shrink-0" fill="none" stroke="#888"><circle cx="5.500" cy="5.500" r="4.500" strokeWidth="1.200" /><path d="M9 9.500l3.500 3.500" strokeWidth="1.700" /></svg>
);
const Small = ({ n, drop }: { n: string; drop?: boolean }) => (
  <div className="relative flex w-[25px] shrink-0 items-center justify-center">
    <Ic n={n} s="size-4" />
    {drop && <svg viewBox="0 0 6 4" className="absolute right-0.5 -bottom-0.5 h-1 w-1.5"><path d="M0 0h6L3 4z" fill="#555" /></svg>}
  </div>
);

/* Scattered islets: x, y and radius in the units of their group. */
const isletsA = [[488, 184, 3], [492, 196, 2], [486, 212, 5], [497, 219, 5], [488, 231, 5], [493, 224, 4], [476, 241, 5], [480, 248, 3], [380, 256, 2], [378, 264, 2], [391, 271, 2.500], [457, 281, 3], [464, 285, 3], [450, 293, 5], [441, 299, 4], [459, 297, 3], [470, 347, 2.500], [465, 356, 2], [460, 363, 2.500], [448, 358, 2], [418, 386, 4], [427, 405, 3], [370, 426, 3], [447, 420, 3], [441, 426, 3], [433, 366, 5], [425, 371, 4], [437, 373, 4], [411, 435, 3], [410, 268, 5], [418, 264, 5], [446, 252, 6], [440, 263, 6], [412, 303, 4], [404, 316, 3], [468, 262, 4], [527, 64, 2.500], [356, 453, 5], [355, 464, 5], [357, 478, 5], [353, 488, 4], [357, 499, 5], [620, 98, 3], [568, 197, 3], [748, 114, 3], [754, 119, 3], [763, 119, 2]];
const isletsB = [[239, 65, 2.500], [256, 66, 3.500], [262, 72, 3], [258, 79, 2.500], [281, 65, 2], [287, 72, 2.500], [284, 80, 2], [267, 97, 3], [296, 88, 5], [305, 82, 5], [312, 91, 7], [303, 97, 7], [322, 94, 4], [309, 103, 3], [244, 153, 3], [253, 156, 2.500], [241, 161, 3], [236, 169, 3.500], [298, 197, 2.500], [296, 206, 1.500], [366, 377, 2.500], [404, 142, 4], [429, 279, 2.500], [434, 275, 3], [245, 490, 3], [340, 317, 2.500]];

function MapCanvas() {
  return (
    <svg viewBox="348 153 1334 910" className="h-[910px] w-[1334px]" fill="#b8484b" stroke="#3b3033" strokeLinejoin="round">
      <path d="M1212.500 200.500l3 1 1.500 4-.5 6-2.500 6-1-1 1.500-5-.2-6zM1210 223l1.500-2v4l-2 3zM1203 233l1.500 1.500-1 1zM1200 236.500l1-.5" strokeWidth="1.100" />
      <g transform="translate(1020 400) scale(.33333)" strokeWidth="3">
        <path d="M394 82L402 80 404 90 408 100 401 95zM406 112L410 114 407 118z" />
        <path d="M398 134L406 141 418 144 419 160 430 170 432 180 444 186 446 204 440 222 428 228 412 224 402 212 398 192 390 178 388 171 378 170 380 155 388 145z" />
        <path d="M424 227L440 229 440 287 446 295 447 318 450 340 444 348 443 380 446 388 438 404 440 418 430 436 428 452 432 458 431 486 434 508 424 514 418 524 408 530 394 528 392 540 400 552 402 570 414 582 418 592 433 612 430 622 405 640 401 652 385 662 382 680 378 690 380 716 360 724 354 740 346 745 348 768 347 787 344 805 336 820 343 838 343 852 351 868 354 884 342 892 339 908 318 908 316 896 328 892 316 886 317 870 300 870 294 876 296 898 306 914 298 916 290 902 270 910 244 906 240 922 246 936 262 940 268 948 250 950 234 958 234 944 240 934 238 912 222 902 214 896 196 890 183 884 190 870 188 850 194 838 188 822 182 804 184 780 174 770 164 774 156 762 142 750 132 745 140 734 130 722 118 720 108 712 126 702 136 686 138 672 122 670 140 662 150 645 136 630 142 616 156 624 174 616 172 602 182 600 196 608 192 630 186 645 196 648 206 624 218 614 222 600 204 596 188 600 172 590 172 578 178 556 176 530 200 530 204 534 206 518 216 500 216 486 228 492 248 484 247 470 250 448 242 436 242 412 252 402 262 404 272 410 290 402 294 384 314 374 322 362 334 364 340 372 362 378 382 374 396 358 420 320 426 304 428 286 420 278 420 266 412 260 416 246 414 234z" />
        <path d="M366 378L355 395 356 420 367 436 361 446 362 470 358 500 356 535M366 446L378 452 398 452 406 444 412 456 432 458M248 474L268 476 290 484 308 490 322 468 336 448 344 470 354 486 360 486M392 528L382 526 370 534 356 535 342 542 332 560 310 580 318 592 326 598 316 618 304 628 300 650 284 676M326 598L340 600 350 624 362 638 372 634 380 620 392 622 405 640M222 600L232 594 240 610 262 626 270 650 280 668 284 678 280 686 287 700 285 718 270 740 272 756 286 758 302 772 320 764 334 778 347 786M146 645L190 648 208 668 214 696 240 704 242 730 248 762 254 772 272 756M254 772L236 802 222 822 206 812 182 804" fill="none" strokeWidth="4" />
        <path d="M396 536L402 544 404 538M262 922L270 932 266 924M282 926L287 930M402 648L406 652" fill="none" strokeWidth="4" />
      </g>
      <g transform="translate(860 670) scale(.33333)" strokeWidth="3">
        <path d="M542 74L552 71 562 79 584 88 592 95 574 97 569 106 555 100 553 92z" />
        <path fillRule="evenodd" d="M522 120L528 112 545 110 566 118 584 118 598 108 620 104 638 98 650 96 654 84 668 86 672 98 670 120 684 134 684 150 676 162 664 174 652 190 640 200 614 202 606 194 604 172 596 152 592 134 582 124 578 142 566 144 562 128 548 118 534 116zM620 128L634 122 650 130 664 130 666 146 656 154 650 172 640 178 628 162 614 148zM586 122L606 132 616 148 624 172 630 182 622 172 606 146 596 132zM612 186L620 186 614 196z" />
        <path d="M624 128L630 138 644 130 652 144M628 146L644 150 654 160M634 156L648 166M640 126L634 138 650 154M622 140L634 154" fill="none" strokeWidth="5" />
        <path d="M512 130L513 148 524 166 544 178 546 190 534 200 538 216 530 236 518 242 506 244 486 262 474 290 468 306 452 320 440 330 436 344 428 346 418 332 406 330 398 316 384 310 376 300 358 294 348 272 340 244 348 256 354 282 366 294 382 298 398 314 404 326 408 358 432 352 448 346 462 326 478 324 490 304 494 282 510 264 524 262 536 270 540 282 556 298 564 300 568 264 550 262 544 240 538 224 548 208 564 204 572 184 556 174 540 168 522 158 514 140z" strokeWidth="3.500" />
        <path d="M408 264L422 272 432 258 446 248 456 252 448 266 436 272 428 284 444 290 446 306 438 322 424 316 418 296 410 288 420 282 408 272z" strokeWidth="4" />
        <path d="M548 208L556 204 552 216 542 220z" fill="#fff" />
        <path d="M500 250L504 240 510 250M524 240L530 230 536 236" />
        <path d="M463 194v76M361 372l44-42" fill="none" strokeWidth="4" />
        <path d="M246 220L252 220 260 238 262 244 274 242 280 246 300 246 302 250 276 250 272 256 264 252 254 240z" />
        <path d="M396 424L404 412 418 406 414 418 406 420 396 432z" />
        <path d="M360 454L378 452 390 444 394 448 382 462 374 474 378 490 394 490 410 486 416 472 414 448 420 438 428 424 432 426 430 450 436 462 436 484 428 498 430 512 440 524 438 534 428 530 424 514 412 508 398 520 380 524 372 514 360 504 364 490 356 480 364 470z" strokeWidth="3.500" />
        <path d="M388 454L398 464 390 472 402 476 406 462 412 468M384 482L396 476 412 484M402 454L410 448M418 440L418 462 422 474M380 470L388 478" fill="none" strokeWidth="4.500" />
        <path d="M312 500L318 506 322 514 316 524 312 514zM292 530L300 534 296 538zM392 566L400 574 410 578 404 584 392 584z" />
        {isletsA.map(([x, y, r], i) => <circle key={i} cx={x} cy={y} r={r * 0.85} strokeWidth="2.800" />)}
      </g>
      <g transform="translate(830 790) scale(.33333)" strokeWidth="3">
        <path d="M240 176L248 178 256 190 256 202 268 226 280 236 288 224 292 212 294 216 290 234 278 242 270 244 262 236 266 226 252 202 248 192z" />
        <path d="M300 272L316 254 314 264 324 264 330 252 340 250 346 268 332 270 318 264z" />
        <path d="M285 317L292 320 302 328 312 324 324 315 340 316 330 321 322 330 310 334 308 340 294 341 290 330z" />
        <path d="M314 350L313 376 318 380 304 394 300 404 288 402 278 410 286 414 294 410 292 422 298 426 302 416 310 404 318 400 332 400 328 410 316 416 310 424 314 432 302 440 284 460 264 470 246 470 240 482 238 500 230 500 224 482 229 470 229 430 240 420 260 412 274 394 290 366 302 354z" />
        <path d="M44 606L72 606 76 600 82 610 99 632 92 646 76 662 58 678 42 677 40 672 50 660 54 636 50 616z" />
        {isletsB.map(([x, y, r], i) => <circle key={i} cx={x} cy={y} r={r * 0.85} strokeWidth="2.800" />)}
      </g>
    </svg>
  );
}

const Spin = () => (
  <div className="flex h-full w-[15px] flex-col items-center justify-center gap-[3px] border-l border-[#c4c4c4] bg-[#f6f6f6]">
    <svg viewBox="0 0 8 5" className="h-[5px] w-2"><path d="M0 5h8L4 0z" fill="#555" /></svg>
    <svg viewBox="0 0 8 5" className="h-[5px] w-2"><path d="M0 0h8L4 5z" fill="#555" /></svg>
  </div>
);
const field = "flex h-[24px] shrink-0 items-center overflow-hidden rounded-[3px] border border-[#b4b4b4] bg-white";

export default function App() {
  return (
    <div className="h-[1104px] w-[1971px] overflow-hidden bg-white font-['Open_Sans','Noto_Sans',sans-serif] text-[13px] leading-[18px] text-[#1c1c1c]">
      <div className="relative flex h-[1094px] w-[1902px] flex-col overflow-hidden bg-[#efefef]">
        <div className="h-[5px] shrink-0 bg-linear-to-r from-[#fbf0e9] via-[#ecf3f8] to-[#f8efef]" />
        <div className="flex h-[21px] shrink-0 items-center gap-3.5 border-b border-[#d8d8d8] pb-px pl-1">
          {menu.map(([a, u, b, w]) => (
            <T key={a + u + b} w={w}>{a}<span className="border-b border-[#333] pb-0 leading-none">{u}</span>{b}</T>
          ))}
        </div>

        <Bar>
          <Handle className="w-[5.500px] overflow-hidden" />
          {["new", "open", "save", "layoutNew", "layoutMgr", "styles"].map((n) => <Btn key={n} n={n} />)}
          <Handle className="w-[16.500px] pl-1" />
          <Btn n="hand" on />
          {["panSel", "zoomIn", "zoomOut", "zoomFull", "zoomSel", "zoomLayer", "zoomNative", "zoomLast", "zoomNext", "mapView", "map3d", "bookmarkNew", "bookmarks", "clock", "refresh"].map((n) => <Btn key={n} n={n} />)}
          <Handle className="w-[14px] pl-1" />
          {["select", "selValue", "deselect", "selLoc"].map((n) => <React.Fragment key={n}><Btn n={n} /><Arrow /></React.Fragment>)}
          <Handle className="w-[15px] pl-1" />
          <Btn n="identify" /><Btn n="abacus" /><Btn n="gear" on /><Btn n="sigma" />
          <Btn n="table" /><Arrow /><Btn n="ruler" /><Arrow />
          <Btn n="tip" /><Btn n="action" /><Arrow off />
        </Bar>

        <Bar>
          <Handle className="w-[5.500px] overflow-hidden" />
          {["dsm", "gpkg", "shp", "spatialite", "memory", "mesh", "gpx"].map((n) => <Btn key={n} n={n} />)}
          <Handle className="w-[16px] pl-1" />
          <div className="relative">
            <Btn n="editsOff" />
            <svg viewBox="0 0 6 4" className="absolute right-0.5 bottom-1 h-1 w-1.5"><path d="M0 0h6L3 4z" fill="#999" /></svg>
          </div>
          <Btn n="pencil" /><Btn n="saveOff" /><Btn n="lineOff" /><Arrow off />
          <Btn n="polyOff" /><Btn n="vertexOff" /><Arrow off />
          {["attrOff", "trashOff", "cutOff", "copyOff", "pasteOff", "undoOff", "redoOff"].map((n) => <Btn key={n} n={n} />)}
          <Handle className="w-[13px] pl-1" />
          <Btn n="abcYellow" /><Btn n="pie" />
          <Sep className="w-[7px]" />
          <Btn n="abcBlue" /><Btn n="abcRed" />
          <Sep className="mr-[3px] w-[6px]" />
          {["abcPin", "abcEye", "abcMove", "abcRot", "abcEdit"].map((n) => <Btn key={n} n={n} />)}
          <Handle className="w-[15px] pl-1" />
          <Btn n="search" />
          <Handle className="w-[16px] pl-1" />
          <Btn n="pyConsole" />
          <Handle className="w-[16px] pl-1" />
          <Btn n="help" />
          <Handle className="w-[18px]" />
        </Bar>

        <Bar className="h-[41px]!">
          <Handle className="w-[5.500px] overflow-hidden" />
          <Btn n="stack" />
        </Bar>

        <div className="mt-px flex h-[912px] shrink-0 border-b border-[#c2c2c2]">
          {/* Left docks */}
          <div className="flex w-[347px] shrink-0 flex-col border-t border-[#d0d0d0]">
            <div className="flex h-[19px] shrink-0 items-center justify-between pr-2">
              <T w={33} className="-ml-0.5">Layers</T>
              <DockButtons />
            </div>
            <div className="flex h-[34px] shrink-0 items-center pl-0">
              <div className="-ml-[3px] flex">
                <Small n="brush" /><Small n="addGroup" /><Small n="eye" drop /><Small n="filter" drop /><Small n="epsilon" />
              </div>
              <div className="flex w-[11px] justify-center"><Arrow /></div>
              <Small n="expand" /><Small n="collapse" /><Small n="removeLayer" />
            </div>
            <div className="mr-[6px] h-[477px] shrink-0 border-t border-r border-b border-[#bdbdbd] bg-white">
              <div className="flex h-[20px] items-center bg-[#efefef] pl-[18px]">
                <div className="flex h-[14px] w-[13px] items-center justify-center border border-[#c8c8c8] bg-white">
                  <svg viewBox="0 0 10 10" className="size-2.5"><path d="M1.500 4.500L4 8.500 8.500 1" fill="none" stroke="#000" strokeWidth="1.800" /></svg>
                </div>
                <div className="ml-[7px] h-[17px] w-4 border border-[#4a2a2b] bg-[#b8484b]" />
                <T w={60} className="ml-[6px] font-bold"><span className="border-b border-[#222] leading-none">PLW_adm1</span></T>
              </div>
            </div>
            <div className="flex h-[7px] shrink-0 items-start justify-center pt-0.5 pr-2">
              <div className="flex gap-0.5">{[0, 1, 2, 3, 4, 5].map((i) => <div key={i} className="size-px bg-[#aaa]" />)}</div>
            </div>
            <div className="flex h-[18px] shrink-0 items-center justify-between pr-2">
              <T w={43} className="-ml-[3px]">Browser</T>
              <DockButtons />
            </div>
            <div className="flex h-[35px] shrink-0 items-center">
              <div className="-ml-[3px] flex"><Small n="addLayer" /><Small n="refresh" /><Small n="filter" /><Small n="collapse" /><Small n="info" /></div>
            </div>
            <div className="mr-[6px] flex min-h-0 grow overflow-hidden border-t border-r border-[#bdbdbd] bg-white">
              <div className="min-w-0 grow">
                {browser.map(([ic, t, w, ex]) => (
                  <div key={t} className="flex h-[19.460px] items-center">
                    <div className="-ml-px flex w-[15px] pl-[2px]">{ex && <Tri />}</div>
                    <Ic n={ic} s="size-4" />
                    <T w={w} className="ml-[6px]">{t}</T>
                  </div>
                ))}
              </div>
              <div className="flex w-[15px] shrink-0 flex-col border-l border-[#c0c0c0]">
                <div className="flex h-[15px] shrink-0 items-center justify-center border-b border-[#c0c0c0]"><svg viewBox="0 0 8 5" className="h-[5px] w-2"><path d="M0 5h8L4 0z" fill="#555" /></svg></div>
                <div className="h-[257px] shrink-0 border-b border-[#c0c0c0] bg-linear-to-r from-white to-[#f5f5f5]" />
                <div className="h-[33px] shrink-0 border-b border-[#c0c0c0] bg-[#e2e2e2]" />
                <div className="flex grow items-center justify-center"><svg viewBox="0 0 8 5" className="h-[5px] w-2"><path d="M0 0h8L4 5z" fill="#555" /></svg></div>
              </div>
            </div>
          </div>

          {/* Map canvas */}
          <div className="h-full w-[1335px] shrink-0 overflow-hidden border border-b-0 border-[#b8b8b8] bg-white"><MapCanvas /></div>

          {/* Splitter */}
          <div className="flex w-[6px] shrink-0 flex-col items-center justify-center gap-0.5 border-t border-[#d0d0d0]">
            {[0, 1, 2, 3, 4, 5].map((i) => <div key={i} className="size-px bg-[#aaa]" />)}
          </div>

          {/* Processing toolbox */}
          <div className="flex min-w-0 grow flex-col border-t border-[#d0d0d0]">
            <div className="flex h-[19px] shrink-0 items-center justify-between pr-[1px] pl-[4px]">
              <T w={101}>Processing Toolbox</T>
              <DockButtons />
            </div>
            <div className="flex h-[34px] shrink-0 items-center pl-[3px]">
              <Small n="gears" drop /><Small n="python" drop /><Small n="history" /><Small n="results" />
              <div className="ml-[3px] h-3.5 w-px bg-[#dcdcdc]" />
              <div className="ml-[3px] flex"><Small n="editInPlace" /></div>
              <div className="ml-[3px] h-3.5 w-px bg-[#dcdcdc]" />
              <div className="ml-[3px] flex"><Small n="wrench" /></div>
            </div>
            <div className="flex h-[24px] shrink-0 items-center rounded-l-[3px] border border-r-0 border-[#b4b4b4] bg-white pl-2">
              <Lens />
              <T w={42} className="ml-[6px] text-[#858585]">Search...</T>
            </div>
            <div className="grow border-l border-[#b8b8b8] bg-white pt-px">
              {toolbox.map(([ic, t, w]) => (
                <div key={t} className="flex h-[19.460px] items-center pl-[8px]">
                  <Tri />
                  <Ic n={ic} s="size-[15px]" className="ml-3" />
                  <T w={w} className="ml-[6px]">{t}</T>
                </div>
              ))}
            </div>
          </div>
        </div>

        {/* Status bar */}
        <div className="flex grow items-center pb-px">
          <div className={field + " -ml-1 w-[201px] pl-[10px]"}>
            <Lens />
            <T w={111} className="ml-[6px] text-[#858585]">Type to locate (Ctrl+K)</T>
          </div>
          <T w={52} className="ml-[913px]">Coordinate</T>
          <div className={field + " ml-1 w-[100px] pl-1.5"}><T w={85}>8.139°, 133.678°</T></div>
          <svg viewBox="0 0 16 17" className="ml-[3px] h-[17px] w-4" fill="none" stroke="#555">
            <path d="M1 2l7 12M4 1l7 10M2 8l9-6M3 11l9-5M15 1L4 14" strokeWidth="1.600" /><circle cx="10" cy="12" r="3.800" fill="#ddd" strokeWidth="1.500" /><circle cx="10" cy="12" r="1" fill="#555" />
          </svg>
          <T w={25} className="ml-[13px]">Scale</T>
          <div className={field + " ml-[3px] w-[81px] pl-1"}>
            <T w={45}>1:612055</T>
            <div className="ml-auto flex h-full w-5 items-center justify-center border-l border-[#c4c4c4] bg-[#f6f6f6]"><svg viewBox="0 0 8 5" className="h-[5px] w-2"><path d="M0 0h8L4 5z" fill="#555" /></svg></div>
          </div>
          <svg viewBox="0 0 13 17" className="ml-[11px] h-[17px] w-[13px]"><path d="M3 8V5q0-4 3.500-4T10 5v3" fill="none" stroke="#aaa" strokeWidth="2" /><rect x=".5" y="7.500" width="12" height="9" rx="1" fill="#666" /></svg>
          <T w={43} className="ml-2">Magnifier</T>
          <div className={field + " ml-1 w-[84px] pl-1"}><T w={29}>100%</T><div className="ml-auto h-full"><Spin /></div></div>
          <T w={41} className="ml-[8px]">Rotation</T>
          <div className={field + " ml-[10px] w-[83px] pl-1"}><T w={25}>0.0 °</T><div className="ml-auto h-full"><Spin /></div></div>
          <div className="ml-[7px] flex h-[15px] w-[13px] items-center justify-center border border-[#c8c8c8] bg-white">
            <svg viewBox="0 0 10 10" className="size-2.5"><path d="M1.500 4.500L4 8.500 8.500 1" fill="none" stroke="#000" strokeWidth="1.800" /></svg>
          </div>
          <T w={34} className="ml-1">Render</T>
          <svg viewBox="0 0 24 24" className="ml-[17px] h-4 w-[15px]" fill="none" stroke="#777" strokeWidth="1.800"><circle cx="12" cy="12" r="10.500" fill="#bbb" /><path d="M1 12h22M12 1v22M3 6.500h18M3 17.500h18M12 1q-9 11 0 22M12 1q9 11 0 22" /></svg>
          <T w={54} className="ml-px">EPSG:4326</T>
          <svg viewBox="0 0 17 17" className="ml-[23px] size-[17px]"><path d="M8.500.500q8 .5 8 7.500 0 4-3 6l1 3-4.500-1.500Q.500 16 .500 8T8.500.500z" fill="#555" /></svg>
        </div>

        <div className="absolute top-2 left-[745px] h-[82px] w-16 border-[5px] border-[#ee1c25]" />
      </div>
    </div>
  );
}
